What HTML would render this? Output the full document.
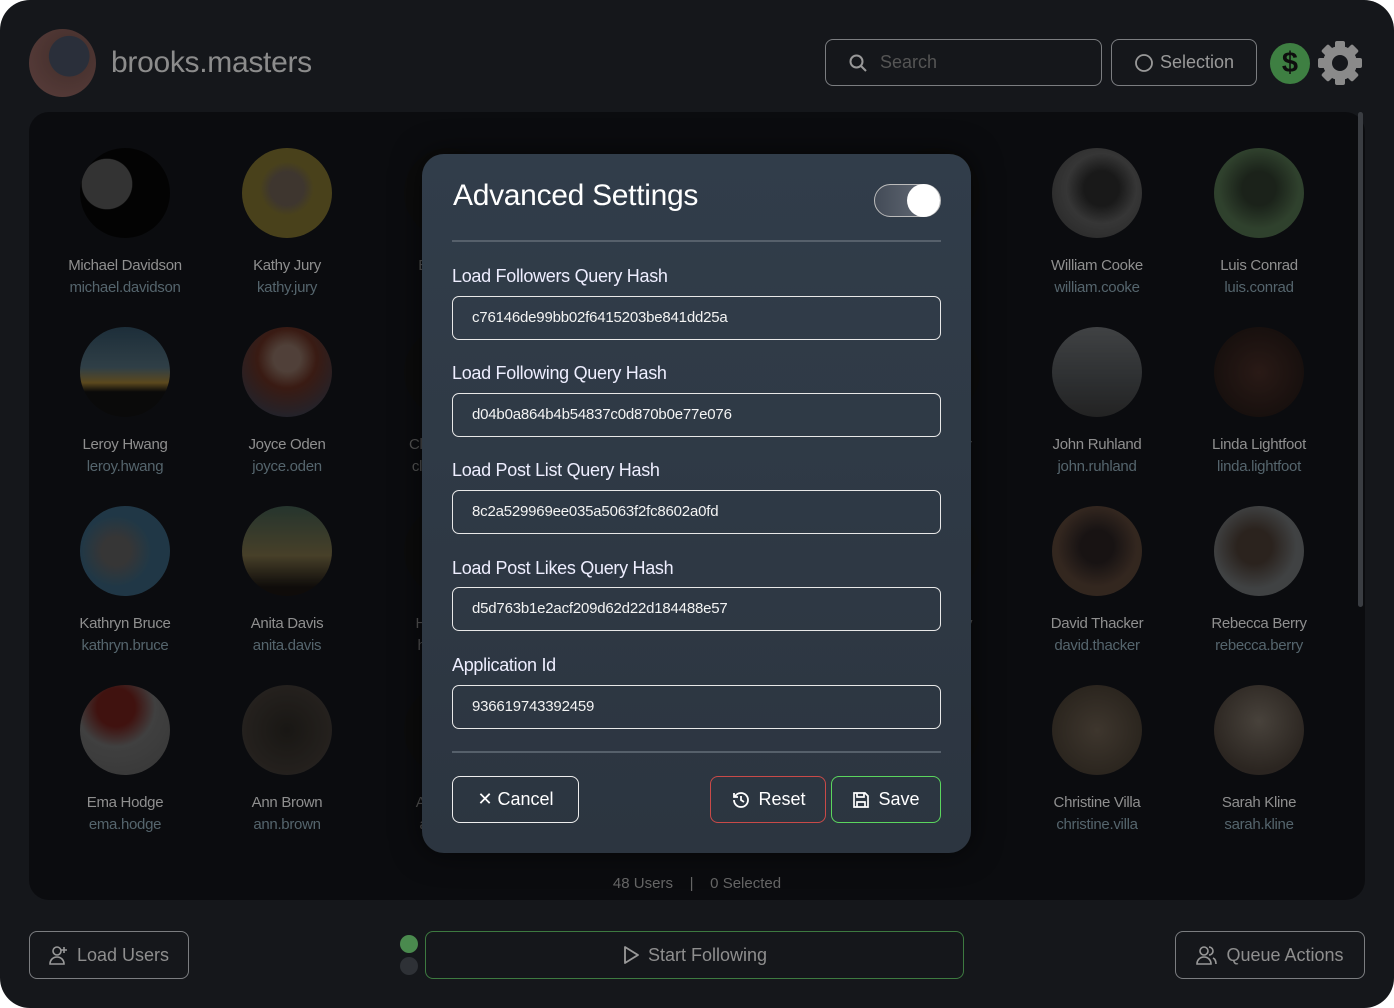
<!DOCTYPE html>
<html><head><meta charset="utf-8"><style>
*{margin:0;padding:0;box-sizing:border-box}
body{width:1394px;height:1008px;background:#fff;font-family:"Liberation Sans",sans-serif;overflow:hidden;position:relative}
.app{position:absolute;left:0;top:0;width:1394px;height:1008px;background:#15171b;border-radius:30px;overflow:hidden}
.top-av{position:absolute;left:29px;top:29px;width:67px;height:68px;border-radius:50%;background:radial-gradient(circle at 60% 40%,#2a2f3a 0 35%,#4a3330 36%,#5a3e3c 100%)}
.uname{position:absolute;left:111px;top:46px;font-size:30px;color:#8c8c8c;letter-spacing:-.3px}
.btn{position:absolute;border:1px solid #7b7d80;border-radius:8px;color:#8e8e8e;font-size:18px;display:flex;align-items:center;justify-content:center;gap:8px}
.panel{position:absolute;left:29px;top:112px;width:1336px;height:788px;background:#0b0c0f;border-radius:20px}
.scroll{position:absolute;left:1358px;top:112px;width:5px;height:495px;background:#3a3d42;border-radius:3px}
.cell{position:absolute;width:162px;text-align:center}
.av{width:90px;height:90px;border-radius:50%;margin:0 auto;filter:brightness(.6) saturate(.8)}
.n{font-size:15px;color:#8f8f8f;margin-top:19px;letter-spacing:-.3px}
.u{font-size:15px;color:#55656d;margin-top:5px;letter-spacing:-.3px}
.count{position:absolute;left:0;width:1394px;top:875px;text-align:center;color:#666;font-size:15px}
.modal{position:absolute;left:422px;top:154px;width:549px;height:699px;background:linear-gradient(180deg,#313d4a,#2c3540);border-radius:22px;box-shadow:0 0 30px rgba(0,0,0,.6)}
.mt{position:absolute;left:31px;top:25px;font-size:30px;color:#fff;letter-spacing:-.3px}
.tog{position:absolute;width:67px;height:33px;border-radius:17px;background:linear-gradient(90deg,#434b57,#6a717c);border:1px solid #bbb}
.knob{position:absolute;right:0;top:-1px;width:33px;height:33px;border-radius:50%;background:#fff}
.hr{position:absolute;left:30px;width:489px;height:2px;background:#56606b}
.lbl{position:absolute;left:30px;font-size:18px;color:#eef;letter-spacing:-.3px}
.inp{position:absolute;left:30px;width:489px;height:44px;border:1px solid #e8e8e8;border-radius:7px;color:#f3f3f3;font-size:15px;padding-left:19px;line-height:42px;letter-spacing:-.2px}
.mb{position:absolute;top:622px;height:47px;border-radius:8px;color:#fff;font-size:18px;display:flex;align-items:center;justify-content:center;gap:8px}
.h .av{background:#141414 !important}
.h .n,.h .u{color:#555}
</style></head><body>
<div class="app">
<div class="top-av"></div>
<div class="uname">brooks.masters</div>
<div class="btn" style="left:825px;top:39px;width:277px;height:47px;justify-content:flex-start;padding-left:22px;gap:12px;color:#555">
<svg width="20" height="20" viewBox="0 0 20 20" fill="none" stroke="#999" stroke-width="2"><circle cx="8.5" cy="8.5" r="6"/><path d="M13 13l5 5"/></svg>Search</div>
<div class="btn" style="left:1111px;top:39px;width:146px;height:47px;gap:6px;color:#999">
<svg width="20" height="20"><circle cx="10" cy="10" r="8" fill="none" stroke="#999" stroke-width="1.8"/></svg>Selection</div>
<div style="position:absolute;left:1270px;top:43px;width:40px;height:41px;border-radius:50%;background:#3e7f42;color:#0e0e0e;font-size:29px;font-weight:bold;text-align:center;line-height:41px">$</div>
<svg style="position:absolute;left:1318px;top:41px" width="44" height="44" viewBox="0 0 44 44"><g fill="#8a8a8a" transform="translate(22 22)"><circle r="17"/><g id="t"><rect x="-5" y="-22" width="10" height="9" rx="2"/></g><use href="#t" transform="rotate(45)"/><use href="#t" transform="rotate(90)"/><use href="#t" transform="rotate(135)"/><use href="#t" transform="rotate(180)"/><use href="#t" transform="rotate(225)"/><use href="#t" transform="rotate(270)"/><use href="#t" transform="rotate(315)"/></g><circle cx="22" cy="22" r="8" fill="#15171b"/></svg>

<div class="panel"></div>
<div class="scroll"></div>

<div class="cell" style="left:44px;top:148px"><div class="av" style="background:radial-gradient(circle at 30% 40%,#555 0 30%,#050505 31%)"></div><div class="n">Michael Davidson</div><div class="u">michael.davidson</div></div>
<div class="cell" style="left:206px;top:148px"><div class="av" style="background:radial-gradient(circle at 50% 45%,#6a5a4a 0 25%,#7d6d1e 40%)"></div><div class="n">Kathy Jury</div><div class="u">kathy.jury</div></div>
<div class="cell h" style="left:368px;top:148px"><div class="av"></div><div class="n">Brian Lee</div><div class="u">brian.lee</div></div>
<div class="cell h" style="left:854px;top:148px"><div class="av"></div><div class="n">Maria Silva</div><div class="u">maria.silva</div></div>
<div class="cell" style="left:1016px;top:148px"><div class="av" style="background:radial-gradient(circle at 55% 45%,#2a2a2a 0 25%,#5a5a5a 50%,#3a3a3a)"></div><div class="n">William Cooke</div><div class="u">william.cooke</div></div>
<div class="cell" style="left:1178px;top:148px"><div class="av" style="background:radial-gradient(circle at 50% 45%,#2a3a28 0 25%,#4a6e45 60%)"></div><div class="n">Luis Conrad</div><div class="u">luis.conrad</div></div>

<div class="cell" style="left:44px;top:327px"><div class="av" style="background:linear-gradient(180deg,#2a4e66 0,#4a6a7a 45%,#a0781e 62%,#111 72%)"></div><div class="n">Leroy Hwang</div><div class="u">leroy.hwang</div></div>
<div class="cell" style="left:206px;top:327px"><div class="av" style="background:radial-gradient(circle at 50% 35%,#8a6a5a 0 18%,#6a2a1a 40%,#3a3a4a 80%)"></div><div class="n">Joyce Oden</div><div class="u">joyce.oden</div></div>
<div class="cell h" style="left:368px;top:327px"><div class="av"></div><div class="n">Clara Nunez</div><div class="u">clara.nunez</div></div>
<div class="cell h" style="left:854px;top:327px"><div class="av"></div><div class="n">Ron Hunter</div><div class="u">ron.hunter</div></div>
<div class="cell" style="left:1016px;top:327px"><div class="av" style="background:linear-gradient(180deg,#6a6e72,#4a4e52 60%,#3a3a3a)"></div><div class="n">John Ruhland</div><div class="u">john.ruhland</div></div>
<div class="cell" style="left:1178px;top:327px"><div class="av" style="background:radial-gradient(circle at 50% 50%,#4a2a22,#2a1a16 70%)"></div><div class="n">Linda Lightfoot</div><div class="u">linda.lightfoot</div></div>

<div class="cell" style="left:44px;top:506px"><div class="av" style="background:radial-gradient(circle at 40% 50%,#5a5a5a 0 20%,#2e5e7c 50%)"></div><div class="n">Kathryn Bruce</div><div class="u">kathryn.bruce</div></div>
<div class="cell" style="left:206px;top:506px"><div class="av" style="background:linear-gradient(180deg,#3a5a4a,#7a6a3a 55%,#1a1410 90%)"></div><div class="n">Anita Davis</div><div class="u">anita.davis</div></div>
<div class="cell h" style="left:368px;top:506px"><div class="av"></div><div class="n">Heidi Berg</div><div class="u">heidi.berg</div></div>
<div class="cell h" style="left:854px;top:506px"><div class="av"></div><div class="n">Mary Lowry</div><div class="u">mary.lowry</div></div>
<div class="cell" style="left:1016px;top:506px"><div class="av" style="background:radial-gradient(circle at 50% 45%,#2a2020 0 25%,#5a4030 60%)"></div><div class="n">David Thacker</div><div class="u">david.thacker</div></div>
<div class="cell" style="left:1178px;top:506px"><div class="av" style="background:radial-gradient(circle at 45% 45%,#4a3a30 0 25%,#6a6e70 60%)"></div><div class="n">Rebecca Berry</div><div class="u">rebecca.berry</div></div>

<div class="cell" style="left:44px;top:685px"><div class="av" style="background:radial-gradient(circle at 40% 25%,#7a1a14 0 22%,#6a6a6a 45%,#5a5a5a)"></div><div class="n">Ema Hodge</div><div class="u">ema.hodge</div></div>
<div class="cell" style="left:206px;top:685px"><div class="av" style="background:radial-gradient(circle at 50% 50%,#2a2620,#3e3630 70%)"></div><div class="n">Ann Brown</div><div class="u">ann.brown</div></div>
<div class="cell h" style="left:368px;top:685px"><div class="av"></div><div class="n">Alex Reed</div><div class="u">alex.reed</div></div>
<div class="cell h" style="left:854px;top:685px"><div class="av"></div><div class="n">Anna Ray</div><div class="u">anna.ray</div></div>
<div class="cell" style="left:1016px;top:685px"><div class="av" style="background:radial-gradient(circle at 50% 50%,#6a5a48,#4a3e30 70%)"></div><div class="n">Christine Villa</div><div class="u">christine.villa</div></div>
<div class="cell" style="left:1178px;top:685px"><div class="av" style="background:radial-gradient(circle at 50% 40%,#7a6e60,#4a3e34 70%)"></div><div class="n">Sarah Kline</div><div class="u">sarah.kline</div></div>

<div class="count">48 Users &nbsp;&nbsp;&nbsp;|&nbsp;&nbsp;&nbsp; 0 Selected</div>

<div class="btn" style="left:29px;top:931px;width:160px;height:48px">
<svg width="20" height="22" viewBox="0 0 20 22" fill="none" stroke="#999" stroke-width="1.6"><circle cx="8" cy="7" r="4"/><path d="M1 20c0-4 3-7 7-7s7 3 7 7z"/><path d="M15 3v6M12 6h6"/></svg>Load Users</div>
<div style="position:absolute;left:400px;top:935px;width:18px;height:18px;border-radius:50%;background:#4a8a4e"></div>
<div style="position:absolute;left:400px;top:957px;width:18px;height:18px;border-radius:50%;background:#2e3136"></div>
<div class="btn" style="left:425px;top:931px;width:539px;height:48px;border-color:#3d7a40;color:#8e8e8e">
<svg width="18" height="20" viewBox="0 0 18 20" fill="none" stroke="#999" stroke-width="1.8"><path d="M3 2l13 8-13 8z" stroke-linejoin="round"/></svg>Start Following</div>
<div class="btn" style="left:1175px;top:931px;width:190px;height:48px">
<svg width="22" height="22" viewBox="0 0 22 22" fill="none" stroke="#999" stroke-width="1.6"><circle cx="8" cy="7" r="4"/><path d="M1 20c0-4 3-7 7-7s7 3 7 7z"/><path d="M13 3a4 4 0 010 8M17 14c2 1 3 3 3 6"/></svg>Queue Actions</div>

<div class="modal">
<div class="mt">Advanced Settings</div>
<div class="tog" style="left:452px;top:30px"><div class="knob"></div></div>
<div class="hr" style="top:86px"></div>
<div class="lbl" style="top:112px">Load Followers Query Hash</div>
<div class="inp" style="top:142px">c76146de99bb02f6415203be841dd25a</div>
<div class="lbl" style="top:209px">Load Following Query Hash</div>
<div class="inp" style="top:239px">d04b0a864b4b54837c0d870b0e77e076</div>
<div class="lbl" style="top:306px">Load Post List Query Hash</div>
<div class="inp" style="top:336px">8c2a529969ee035a5063f2fc8602a0fd</div>
<div class="lbl" style="top:404px">Load Post Likes Query Hash</div>
<div class="inp" style="top:433px">d5d763b1e2acf209d62d22d184488e57</div>
<div class="lbl" style="top:501px">Application Id</div>
<div class="inp" style="top:531px">936619743392459</div>
<div class="hr" style="top:597px"></div>
<div class="mb" style="left:30px;width:127px;border:1px solid #eee">✕&nbsp;Cancel</div>
<div class="mb" style="left:288px;width:116px;border:1px solid #c94a48">
<svg width="20" height="20" viewBox="0 0 20 20" fill="none" stroke="#fff" stroke-width="1.8"><path d="M4 10a7 7 0 107-7 7 7 0 00-6 3.5"/><path d="M4 3v4h4"/><path d="M11 6v4l3 2"/></svg>Reset</div>
<div class="mb" style="left:409px;width:110px;border:1px solid #5bd65e">
<svg width="18" height="18" viewBox="0 0 18 18" fill="none" stroke="#fff" stroke-width="1.7"><path d="M2 2h11l3 3v11H2z"/><path d="M5 2v4h7V2M5 16v-5h8v5"/></svg>Save</div>
</div>
</div>
</body></html>
